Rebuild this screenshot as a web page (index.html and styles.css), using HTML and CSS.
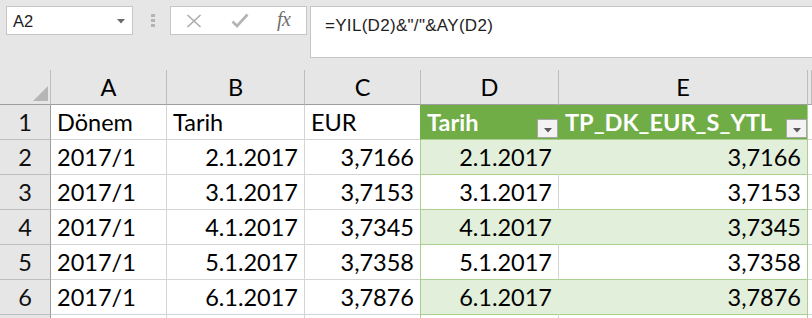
FILE: index.html
```html
<!DOCTYPE html>
<html lang="tr">
<head>
<meta charset="utf-8">
<title>Excel</title>
<link rel="stylesheet" href="styles.css">
</head>
<body>
<div class="toolbar">
  <div class="namebox">
    <span class="name">A2</span>
    <svg class="nb-arrow" width="8" height="5" viewBox="0 0 8 5"><path d="M0 0H8L4 4.5Z" fill="#6a6a6a"/></svg>
  </div>
  <div class="grip"><i></i><i></i><i></i></div>
  <div class="fnbox">
    <svg class="ico" width="16" height="14" viewBox="0 0 16 14"><path d="M1.5 1L14.5 13M14.5 1L1.5 13" stroke="#ababab" stroke-width="1.6" fill="none"/></svg>
    <svg class="ico" width="18" height="15" viewBox="0 0 18 15"><path d="M1.5 8.5L6 13L16.5 1.5" stroke="#b4b4b4" stroke-width="2.6" fill="none"/></svg>
    <span class="fx">fx</span>
  </div>
  <div class="formula">=YIL(D2)&amp;"/"&amp;AY(D2)</div>
</div>
<div class="sheet">
  <div class="row colhead">
    <div class="corner"><span class="tri"></span></div>
    <div class="ch">A</div><div class="ch">B</div><div class="ch">C</div><div class="ch">D</div><div class="ch">E</div><div class="ch last"></div>
  </div>
  <div class="row">
    <div class="rh">1</div>
    <div class="c">Dönem</div><div class="c">Tarih</div><div class="c">EUR</div>
    <div class="c th first"><span>Tarih</span><span class="filter"><svg width="8" height="5" viewBox="0 0 8 5"><path d="M0 0H8L4 4.5Z" fill="#595959"/></svg></span></div>
    <div class="c th tlast"><span>TP_DK_EUR_S_YTL</span><span class="filter"><svg width="8" height="5" viewBox="0 0 8 5"><path d="M0 0H8L4 4.5Z" fill="#595959"/></svg></span></div>
    <div class="c last"></div>
  </div>
  <div class="row">
    <div class="rh">2</div>
    <div class="c">2017/1</div><div class="c r">2.1.2017</div><div class="c r">3,7166</div>
    <div class="c r tb band first">2.1.2017</div><div class="c r tb band tlast">3,7166</div><div class="c last"></div>
  </div>
  <div class="row">
    <div class="rh">3</div>
    <div class="c">2017/1</div><div class="c r">3.1.2017</div><div class="c r">3,7153</div>
    <div class="c r tb first">3.1.2017</div><div class="c r tb tlast">3,7153</div><div class="c last"></div>
  </div>
  <div class="row">
    <div class="rh">4</div>
    <div class="c">2017/1</div><div class="c r">4.1.2017</div><div class="c r">3,7345</div>
    <div class="c r tb band first">4.1.2017</div><div class="c r tb band tlast">3,7345</div><div class="c last"></div>
  </div>
  <div class="row">
    <div class="rh">5</div>
    <div class="c">2017/1</div><div class="c r">5.1.2017</div><div class="c r">3,7358</div>
    <div class="c r tb first">5.1.2017</div><div class="c r tb tlast">3,7358</div><div class="c last"></div>
  </div>
  <div class="row">
    <div class="rh">6</div>
    <div class="c">2017/1</div><div class="c r">6.1.2017</div><div class="c r">3,7876</div>
    <div class="c r tb band first">6.1.2017</div><div class="c r tb band tlast">3,7876</div><div class="c last"></div>
  </div>
  <div class="row stub">
    <div class="rh"></div>
    <div class="c"></div><div class="c"></div><div class="c"></div>
    <div class="c tb first"></div><div class="c tb tlast"></div><div class="c last"></div>
  </div>
</div>
</body>
</html>
```

FILE: styles.css
```css
* { box-sizing: border-box; }
html, body { margin: 0; padding: 0; }
body {
  width: 812px;
  height: 318px;
  overflow: hidden;
  background: #e6e6e6;
  font-family: "Liberation Sans", Arial, sans-serif;
  color: #000;
}
.toolbar {
  height: 70px;
  display: flex;
  align-items: flex-start;
  padding: 6px 0 0 6px;
}
.namebox {
  width: 127px;
  height: 29px;
  background: #fff;
  border: 1px solid #c6c6c6;
  display: flex;
  align-items: center;
  justify-content: space-between;
  padding: 0 7px 0 6px;
}
.name { font-size: 16.5px; color: #1e1e1e; line-height: 1; margin-top: 1px; }
.nb-arrow { margin-top: 1px; }
.grip {
  width: 37px;
  height: 29px;
  display: flex;
  flex-direction: column;
  align-items: center;
  justify-content: center;
  gap: 2px;
  padding-left: 2px;
}
.grip i { width: 4px; height: 3px; background: #b4b4b4; display: block; }
.fnbox {
  width: 137px;
  height: 29px;
  background: #fff;
  border: 1px solid #c6c6c6;
  display: flex;
  align-items: center;
  padding-left: 15px;
}
.fnbox .ico { display: block; margin-right: 29px; }
.fnbox .ico + .ico { margin-right: 28px; }
.fx {
  font-family: "Liberation Serif", "Times New Roman", serif;
  font-style: italic;
  font-size: 20px;
  color: #6f6f6f;
  line-height: 1;
  margin-top: -3px;
  letter-spacing: -0.5px;
}
.formula {
  margin-left: 3px;
  flex: 1;
  height: 52px;
  background: #fff;
  border: 1px solid #c6c6c6;
  border-right: none;
  padding: 10px 0 0 14px;
  font-size: 17px;
  letter-spacing: 0.3px;
  line-height: 1;
  color: #1e1e1e;
  white-space: nowrap;
}
.sheet { font-family: Lato, "Open Sans", sans-serif; font-size: 23.5px; }
.row {
  display: grid;
  grid-template-columns: 51px 116px 138px 116px 138px 249px 1fr;
  height: 35px;
}
.row.stub { height: 3px; }
.row > div {
  background: #fff;
  border-right: 1px solid #d4d4d4;
  border-bottom: 1px solid #d4d4d4;
  display: flex;
  align-items: flex-end;
  line-height: 1;
  padding: 0 6px 5px 6px;
  white-space: nowrap;
  overflow: hidden;
}
.row.stub > div { border-bottom: none; padding: 0; }
.row.colhead > div {
  background: #e6e6e6;
  border-right: 1px solid #bdbdbd;
  border-bottom: 1px solid #9e9e9e;
  justify-content: center;
  padding-left: 0;
  padding-right: 0;
}
.corner { position: relative; }
.tri {
  position: absolute;
  right: 2px;
  bottom: 3px;
  width: 0;
  height: 0;
  border-left: 15px solid transparent;
  border-bottom: 15px solid #b6b6b6;
}
.row > .rh {
  background: #e6e6e6;
  border-right: 1px solid #9e9e9e;
  border-bottom: 1px solid #bdbdbd;
  justify-content: center;
  padding-left: 0;
  padding-right: 0;
  color: #111;
}
.row > .r { justify-content: flex-end; padding-right: 6px; }
.row > .last { border-right: none; }
.row > .tb { border-bottom-color: #a9d08e; }
.row > .first { border-left: 1px solid #a9d08e; margin-left: -1px; }
.row > .tlast { border-right-color: #a9d08e; }
.row > .band { background: #e2efda; border-right-color: #e2efda; }
.row > .band.tlast { border-right-color: #a9d08e; }
.row > .th {
  background: #70ad47;
  color: #fff;
  font-weight: 700;
  border-right-color: #70ad47;
  border-bottom-color: #a9d08e;
  justify-content: space-between;
  padding-right: 0;
}
.row > .th.first { border-left-color: #70ad47; }
.row > .th.tlast { border-right-color: #a9d08e; }
.filter {
  width: 21px;
  height: 19px;
  background: #f3f3f3;
  border: 1px solid #a6a6a6;
  display: flex;
  align-items: center;
  justify-content: center;
  padding-top: 3px;
  margin-bottom: -4px;
  flex: none;
}
.filter svg { display: block; }
```
